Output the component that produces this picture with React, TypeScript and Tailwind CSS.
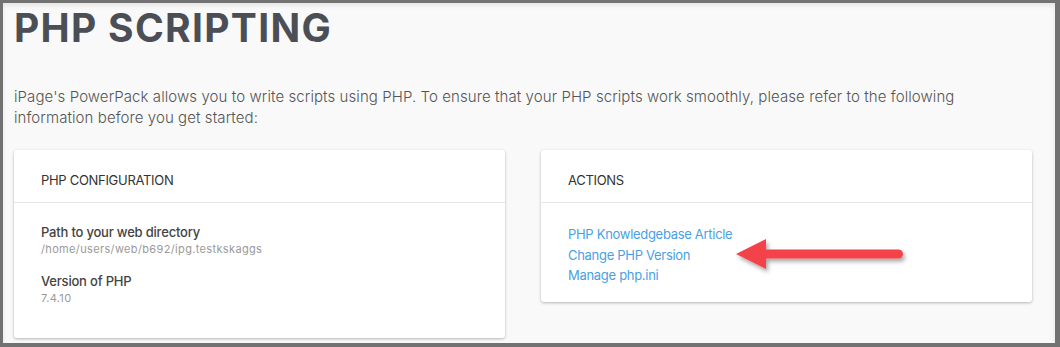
import React from 'react';

const font = { fontFamily: '"Inter", "Open Sans", sans-serif' };

const Card = ({ title, children, className = '' }: { title: string; children: React.ReactNode; className?: string }) => (
  <div className={`bg-white rounded-[3px] shadow-[0_1px_3px_rgba(0,0,0,0.28)] ${className}`}>
    <div className="h-[53px] border-b border-[#e6e6e6] pl-[27px] pt-[22px] text-[13px] leading-[16px] text-[#333] tracking-[-0.3px]">
      {title}
    </div>
    {children}
  </div>
);

const Arrow = () => (
  <svg className="absolute left-[730px] top-[236px]" width="180" height="40" viewBox="0 0 180 40">
    <defs>
      <filter id="sh" x="-10%" y="-30%" width="130%" height="180%">
        <feDropShadow dx="2" dy="3" stdDeviation="2" floodColor="#000" floodOpacity="0.35" />
      </filter>
    </defs>
    <g filter="url(#sh)" fill="#f4434b">
      <path d="M6 18 L36 3 L36 33 Z" />
      <rect x="30" y="13.5" width="143" height="9" rx="4.5" />
    </g>
  </svg>
);

export default function App() {
  return (
    <div className="relative w-[1060px] h-[347px] bg-[#727272] pt-[3px] pl-[3px] pr-[5px] pb-[4px]" style={font}>
      <div className="h-full bg-[#f9f9f9] shadow-[inset_0_3px_4px_rgba(0,0,0,0.08)] pl-[11px] pr-[23px] overflow-hidden">
        <h1 className="mt-[5px] text-[39px] leading-[40px] font-bold tracking-[1.3px] text-[#4b4f55]">PHP SCRIPTING</h1>
        <p className="mt-[38px] text-[15px] leading-[21px] font-light text-[#555] tracking-[0.08px]">
          iPage's PowerPack allows you to write scripts using PHP. To ensure that your PHP scripts work smoothly, please refer to the following
          <br />
          information before you get started:
        </p>
        <div className="mt-[22px] grid grid-cols-2 gap-[36px] items-start">
          <Card title="PHP CONFIGURATION" className="h-[188px]">
            <div className="pl-[27px] pt-[20px]">
              <div className="text-[13px] leading-[18px] font-medium text-[#444] tracking-[-0.2px]">Path to your web directory</div>
              <div className="text-[11px] leading-[16px] text-[#9a9a9a] tracking-[0.35px]">/home/users/web/b692/ipg.testkskaggs</div>
              <div className="mt-[15px] text-[13px] leading-[18px] font-medium text-[#444] tracking-[-0.2px]">Version of PHP</div>
              <div className="text-[11px] leading-[16px] text-[#9a9a9a] tracking-[0.35px]">7.4.10</div>
            </div>
          </Card>
          <Card title="ACTIONS" className="h-[152px]">
            <div className="pl-[27px] pt-[21px] flex flex-col text-[13px] leading-[20.5px] text-[#4a9fe4] tracking-[-0.3px]">
              <a>PHP Knowledgebase Article</a>
              <a>Change PHP Version</a>
              <a>Manage php.ini</a>
            </div>
          </Card>
        </div>
      </div>
      <Arrow />
    </div>
  );
}
